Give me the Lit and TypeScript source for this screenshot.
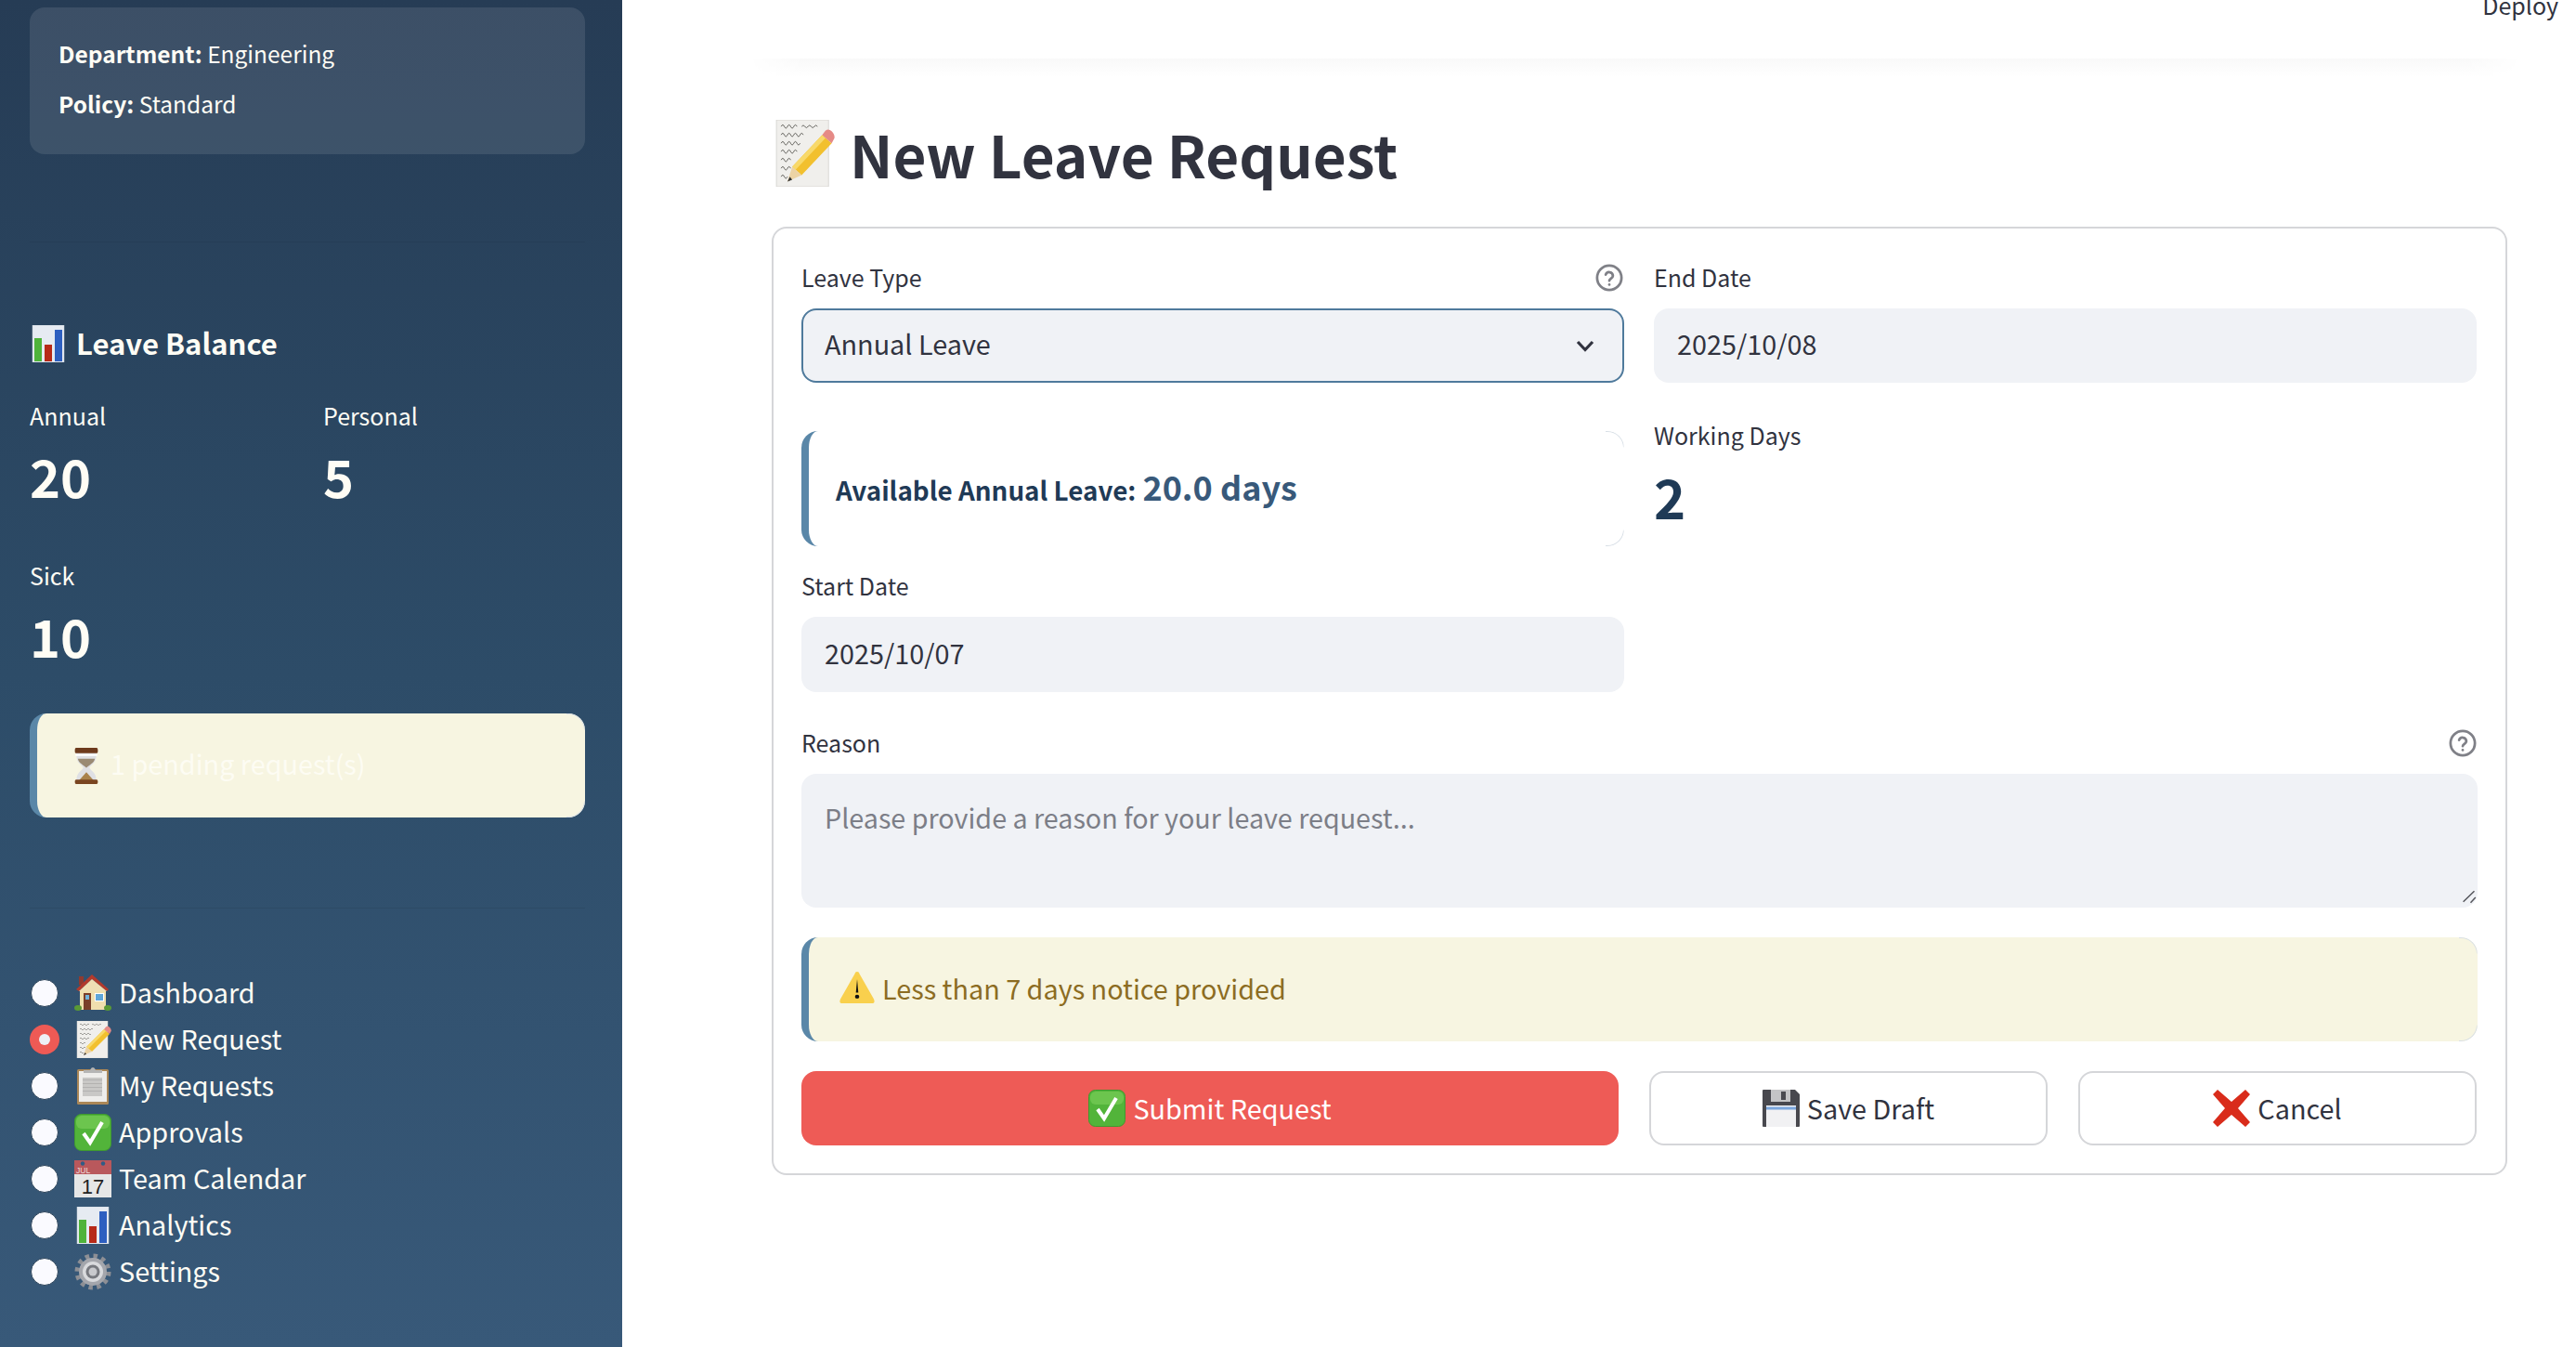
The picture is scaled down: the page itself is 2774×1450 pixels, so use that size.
import { LitElement, html, css, svg } from "lit";
import { customElement } from "lit/decorators.js";

const glyphs: Record<string, any> = {
  memo: svg`<rect x="3" y="0" width="33" height="40" fill="#f0efec" stroke="#d4d3cf" stroke-width=".5"/>
    <g fill="none" stroke="#55534f" stroke-width=".5"><path d="M6 4q1-2 2 0t2 0 2 0 2 0 2 0M19 4q1-1.500 2 0t2 0 2 0 2 0 2 0M6 9q1-2 2 0t2 0 2 0 2 0 2 0 2 0 2 0M6 14q1-2 2 0t2 0 2 0 2 0 2 0 2 0M6 19q1-2 2 0t2 0 2 0 2 0 2 0M6 24q1-2 2 0t2 0 2 0M6 29q1-2 2 0t2 0 2 0M6 34q1-2 2 0t2 0"/></g>
    <polygon points="13,28 32,9 38,14 19,33" fill="#f2c02e"/><polygon points="13,28 32,9 34,11 15,30" fill="#f8d96a"/>
    <polygon points="13,28 19,33 10,37" fill="#ecd3a5"/><polygon points="11.500,34 13,35.800 10,37" fill="#333"/>
    <path d="M32 9l2-2.500q2-1.500 4 .3t1.800 4L38 14z" fill="#e58a86"/>`,
  chart: svg`<rect x="3" y="0" width="34" height="40" fill="#e6ebf2" stroke="#c8ced8" stroke-width=".5"/>
    <rect x="5" y="14" width="8" height="25" fill="#4fb33a"/><rect x="16" y="21" width="8" height="18" fill="#b72a18"/><rect x="27" y="5" width="8" height="34" fill="#2d5fc0"/>`,
  hourglass: svg`<path d="M3 6h34l-1 5c-1 6-9 8-11 11 2 3 10 5 11 11l1 4H3l1-4c1-6 9-8 11-11-2-3-10-5-11-11z" fill="#dfe0e4"/>
    <path d="M6 12h28c-1 5-10 7-14 10-4-3-13-5-14-10z" fill="#9a8a73"/><path d="M20 27l-12 9h24z" fill="#a9824c"/>
    <rect x="1" y="0" width="38" height="6" rx="2" fill="#6d3a1c"/><rect x="2" y="7" width="36" height="2" fill="#fff"/><rect x="1" y="35" width="38" height="5" rx="2" fill="#7a4520"/>`,
  house: svg`<rect x="5" y="2" width="5" height="9" fill="#8f3a30"/><rect x="6" y="18" width="28" height="20" fill="#f0dfae"/>
    <polygon points="19,0 37,16 35,18 19,5 5,18 2,16" fill="#b33a2c"/><polygon points="19,5 35,18 5,18" fill="#efdfb4"/>
    <rect x="10" y="20" width="8" height="18" fill="#7a3f2a"/><rect x="12" y="22" width="4" height="5" fill="#6fb2dc"/>
    <rect x="22" y="20" width="10" height="9" fill="#fff"/><rect x="23" y="21" width="8" height="7" fill="#5fa6d8"/>
    <ellipse cx="4" cy="36" rx="4" ry="3" fill="#5a9a35"/><ellipse cx="36" cy="36" rx="4" ry="3" fill="#5a9a35"/>`,
  clipboard: svg`<rect x="3" y="2" width="34" height="38" rx="1.500" fill="#ab8757"/><rect x="5" y="4" width="30" height="33" fill="#eeedeb"/>
    <g fill="#c9c8c6"><rect x="9" y="11" width="21" height="20"/></g><g fill="#adacaa"><rect x="9" y="13" width="21" height=".8"/><rect x="9" y="17" width="21" height=".8"/><rect x="9" y="21" width="21" height=".8"/><rect x="9" y="25" width="21" height=".8"/></g>
    <path d="M10 3h7q1-3 3-3t3 3h7v3H10z" fill="#b5b5b5"/>`,
  check: svg`<rect x=".5" y=".5" width="39" height="39" rx="7" fill="#52b43a" stroke="#3f9a2f"/><rect x="2" y="2" width="36" height="14" rx="6" fill="#7fd05c" opacity=".6"/>
    <path d="M10 21l7 10 13-22" fill="none" stroke="#fff" stroke-width="4"/>`,
  calendar: svg`<rect x="0" y="0" width="40" height="40" fill="#e6e6e6"/><rect x="0" y="0" width="40" height="15" fill="#b9585c"/>
    <circle cx="9" cy="3.500" r="2.200" fill="#2f5c86"/><circle cx="31" cy="3.500" r="2.200" fill="#2f5c86"/>
    <text x="2" y="13.500" font-size="8.500" font-family="Liberation Sans, sans-serif" fill="#f3dcdc">JUL</text>
    <text x="20" y="36" text-anchor="middle" font-size="22" font-family="Liberation Sans, sans-serif" fill="#222">17</text>`,
  gear: svg`<circle cx="20" cy="20" r="16.500" fill="none" stroke="#8d8f95" stroke-width="6" stroke-dasharray="4.300 4.340"/>
    <circle cx="20" cy="20" r="15" fill="#a4a6ac"/><circle cx="20" cy="20" r="11" fill="#d9dadd"/><circle cx="20" cy="20" r="7.500" fill="#77797f"/><circle cx="20" cy="20" r="4.500" fill="#c8c9cd"/>`,
  warn: svg`<path d="M20 1c1.500 0 2 1 2.500 2.500L38 34c1 3 1 5-2 5H4c-3 0-3-2-2-5L17.500 3.500C18 2 18.500 1 20 1z" fill="#f9d04d"/>
    <path d="M20 10l1.300 16h-2.600z" fill="#111"/><circle cx="20" cy="31" r="2.300" fill="#111"/>`,
  floppy: svg`<path d="M0 1q0-1 1-1h34l5 5v34q0 1-1 1H1q-1 0-1-1z" fill="#48484e"/><rect x="9" y="0" width="21" height="13" fill="#c4c4c6"/><rect x="20" y="2" width="5" height="9" fill="#4a4a50"/>
    <rect x="4" y="17" width="32" height="23" fill="#f1f1f3"/><rect x="4" y="18.500" width="32" height="3" fill="#7ba6dd"/>`,
  cross: svg`<polygon points="0,5 5,0 20,13 35,0 40,5 27,20 40,35 35,40 20,27 5,40 0,35 13,20" fill="#d92c1b"/>`,
};

@customElement("app-root")
export class AppRoot extends LitElement {
  static styles = css`
    :host { display: block; width: 2774px; height: 1450px; overflow: hidden; background: #fff;
      font-family: "Noto Sans CJK SC", "Noto Sans CJK JP", "Noto Sans", sans-serif; color: #31333f; }
    .page { display: flex; width: 2774px; height: 1450px; overflow: hidden; }
    .e { display: block; flex: none; width: 40px; height: 40px; }
    .side { flex: none; box-sizing: border-box; width: 670px; height: 1450px; padding: 8px 40px 0 32px; color: #fffdf5;
      background: linear-gradient(180deg, #263c55 0%, #2d4c68 50%, #385979 100%); }
    .info { box-sizing: border-box; height: 158px; padding: 23px 31px 27px; border-radius: 16px; background: rgba(255,255,255,.1); font-size: 24.500px; line-height: 54px; }
    .info b { font-weight: 700; }
    .rule { height: 1px; background: rgba(20,35,55,.13); }
    .r1 { margin-top: 94px; }
    .r2 { margin-top: 97px; }
    .lb { display: flex; align-items: center; gap: 10px; margin-top: 85px; height: 48px; font-size: 31px; font-weight: 700; line-height: 48px; }
    .lb span { margin-top: -3px; }
    .stats { display: grid; grid-template-columns: 284px 1fr; column-gap: 32px; row-gap: 49px; margin-top: 35px; }
    .lab { font-size: 25px; line-height: 36px; }
    .val { margin-top: 7px; font-size: 56px; font-weight: 700; line-height: 80px; }
    .pend { position: relative; box-sizing: border-box; display: flex; align-items: center; gap: 13px; height: 112px; margin-top: 44px; padding-left: 40px;
      border-left: 8px solid #5a87a8; border-radius: 18px; background: #f7f5e1; color: #fdfcf3; font-size: 28.800px; line-height: 40px; }
    .pend .e { width: 26px; height: 39px; }
    .pend span { margin-top: -4px; }
    .nav { display: flex; flex-direction: column; margin-top: 66px; }
    .opt { display: flex; align-items: center; height: 50px; font-size: 28.800px; }
    .rad { flex: none; box-sizing: border-box; width: 30px; height: 30px; margin: 0 17px 0 1px; border: 1px solid #2b4258; border-radius: 50%; background: #fafaff; }
    .rad.on { display: flex; align-items: center; justify-content: center; width: 32px; height: 32px; margin: 0 16px 0 0; border: 0; background: #ee5a55; }
    .rad.on::after { content: ""; width: 12px; height: 12px; border-radius: 50%; background: #eef0f6; }
    .opt span { margin: -2px 0 0 8px; line-height: 40px; }
    .main { flex: 1; min-width: 0; padding-left: 161px; }
    .top { display: flex; justify-content: flex-end; height: 63px; padding-right: 19px; }
    .top span { display: block; margin-top: -13px; font-size: 25px; line-height: 36px; }
    .stripe { height: 20px; margin: 0 59px 0 -25px; background: linear-gradient(180deg, #f9f9f9, #fff);
      -webkit-mask-image: linear-gradient(90deg, transparent, #000 60px, #000 calc(100% - 60px), transparent); mask-image: linear-gradient(90deg, transparent, #000 60px, #000 calc(100% - 60px), transparent); }
    .ttl { display: flex; align-items: center; gap: 16px; margin-top: 46px; height: 72px; font-size: 62px; font-weight: 700; line-height: 72px; }
    .ttl .e { width: 68px; height: 72px; }
    .card { box-sizing: border-box; width: 1869px; height: 1021px; margin-top: 43px; padding: 35px 30px 30px; border: 2px solid #d5d6d9; border-radius: 16px; }
    .cols { display: grid; grid-template-columns: 886px 886px; column-gap: 32px; }
    .lbl { display: flex; align-items: center; justify-content: space-between; height: 36px; font-size: 25px; line-height: 36px; }
    .lbl span { margin-top: -3px; }
    .help { flex: none; width: 30px; height: 30px; margin-right: 1px; }
    .fld { box-sizing: border-box; display: flex; align-items: center; justify-content: space-between; margin-top: 15px; padding: 0 25px; border-radius: 16px; background: #f0f2f6; font-size: 28.800px; line-height: 40px; }
    .fld span { margin-top: -4px; }
    .sel { height: 80px; padding: 0 30px 0 23px; border: 2px solid #4f7a9c; }
    .date { height: 80px; }
    .chev { width: 20px; height: 13px; }
    .avail { position: relative; box-sizing: border-box; display: flex; align-items: baseline; gap: 7px; height: 124px; margin-top: 52px; padding: 35px 0 0 29px; border-left: 8px solid #5a87a8; border-radius: 18px; background: #fff; color: #1f3a56; font-size: 27.800px; font-weight: 700; line-height: 48px; }
    .avail b { color: #38597a; font-size: 36px; font-weight: 700; }
    .corner::after { content: ""; position: absolute; top: 0; right: 0; bottom: 0; width: 20px; box-sizing: border-box; border: 1px solid #d8dfe6; border-left: 0; border-radius: 0 18px 18px 0;
      -webkit-mask-image: linear-gradient(180deg, #000 16px, transparent 18px, transparent calc(100% - 18px), #000 calc(100% - 16px)); mask-image: linear-gradient(180deg, #000 16px, transparent 18px, transparent calc(100% - 18px), #000 calc(100% - 16px)); }
    .s { margin-top: 25px; }
    .wd { margin-top: 39px; }
    .two { margin-top: 7px; color: #1f3a56; font-size: 58px; font-weight: 700; line-height: 80px; }
    .start { height: 81px; }
    .rs { margin-top: 37px; }
    .ta { position: relative; box-sizing: border-box; height: 144px; margin-top: 15px; padding: 27px 25px 0; border-radius: 16px; background: #f0f2f6; color: #7c7e87; font-size: 28.700px; line-height: 40px; }
    .grip { position: absolute; right: 0; bottom: 0; width: 20px; height: 20px; }
    .warn { position: relative; box-sizing: border-box; display: flex; align-items: center; gap: 7px; height: 112px; margin-top: 32px; padding-left: 32px; border-left: 8px solid #5a87a8; border-radius: 18px; background: #f7f5e1; color: #8c6c22; font-size: 28.800px; line-height: 40px; }
    .warn .e { height: 36px; margin-top: -4px; }
    .warn span { margin-top: -2px; }
    .btns { display: grid; grid-template-columns: 880px 429px 429px; column-gap: 33px; margin-top: 32px; }
    .btn { box-sizing: border-box; display: flex; align-items: center; justify-content: center; gap: 8px; height: 80px; border: 2px solid #d5d6d9; border-radius: 16px; background: #fff; font-size: 28.800px; line-height: 40px; }
    .btn.p { border: 0; background: #ee5b56; color: #fff; }
  `;

  private e(name: string) {
    return html`<svg class="e" viewBox="0 0 40 40" preserveAspectRatio="none" aria-hidden="true">${glyphs[name]}</svg>`;
  }

  private help() {
    return html`<svg class="help" viewBox="0 0 24 24" fill="none" stroke="#7f8087" stroke-width="2.200" stroke-linecap="round" aria-hidden="true">
      <circle cx="12" cy="12" r="10.500"></circle><path d="M8.900 9.300a3.200 3.200 0 0 1 6.200 1c0 2.100-3.100 2.500-3.100 4.200"></path><path d="M12 17.800v.1"></path></svg>`;
  }

  render() {
    const nav = [["house", "Dashboard"], ["memo", "New Request"], ["clipboard", "My Requests"], ["check", "Approvals"], ["calendar", "Team Calendar"], ["chart", "Analytics"], ["gear", "Settings"]];
    return html`<div class="page">
      <aside class="side">
        <div class="info"><div><b>Department:</b> Engineering</div><div><b>Policy:</b> Standard</div></div>
        <div class="rule r1"></div>
        <div class="lb">${this.e("chart")}<span>Leave Balance</span></div>
        <div class="stats">
          <div><div class="lab">Annual</div><div class="val">20</div></div>
          <div><div class="lab">Personal</div><div class="val">5</div></div>
          <div><div class="lab">Sick</div><div class="val">10</div></div>
        </div>
        <div class="pend corner">${this.e("hourglass")}<span>1 pending request(s)</span></div>
        <div class="rule r2"></div>
        <div class="nav">
          ${nav.map(([g, t], i) => html`<div class="opt"><i class="rad ${i === 1 ? "on" : ""}"></i>${this.e(g)}<span>${t}</span></div>`)}
        </div>
      </aside>
      <main class="main">
        <div class="top"><span>Deploy</span></div>
        <div class="stripe"></div>
        <div class="ttl">${this.e("memo")}<span>New Leave Request</span></div>
        <section class="card">
          <div class="cols">
            <div>
              <div class="lbl"><span>Leave Type</span>${this.help()}</div>
              <div class="fld sel"><span>Annual Leave</span>
                <svg class="chev" viewBox="0 0 20 13" fill="none" stroke="#31333f" stroke-width="3.200" aria-hidden="true"><path d="M2 2l8 8.500L18 2"></path></svg></div>
              <div class="avail corner"><span>Available Annual Leave:</span><b>20.0 days</b></div>
              <div class="lbl s"><span>Start Date</span></div>
              <div class="fld start"><span>2025/10/07</span></div>
            </div>
            <div>
              <div class="lbl"><span>End Date</span></div>
              <div class="fld date"><span>2025/10/08</span></div>
              <div class="lbl wd"><span>Working Days</span></div>
              <div class="two">2</div>
            </div>
          </div>
          <div class="lbl rs"><span>Reason</span>${this.help()}</div>
          <div class="ta">Please provide a reason for your leave request...
            <svg class="grip" viewBox="0 0 20 20" fill="none" stroke="#55565c" stroke-width="1.500" aria-hidden="true"><path d="M4.600 13.700L16.500 2.300M12.500 14.700L17.800 9"></path></svg></div>
          <div class="warn corner">${this.e("warn")}<span>Less than 7 days notice provided</span></div>
          <div class="btns">
            <div class="btn p">${this.e("check")}<span>Submit Request</span></div>
            <div class="btn">${this.e("floppy")}<span>Save Draft</span></div>
            <div class="btn">${this.e("cross")}<span>Cancel</span></div>
          </div>
        </section>
      </main>
    </div>`;
  }
}
